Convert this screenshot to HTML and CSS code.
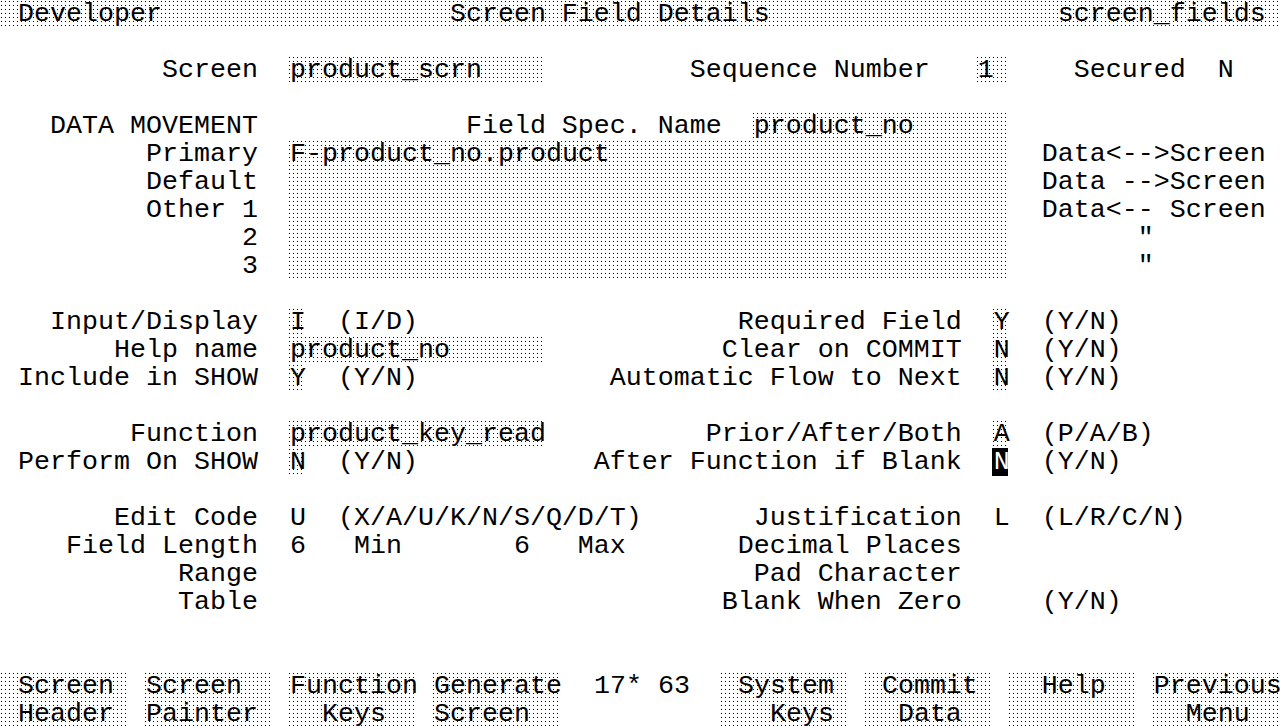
FILE: index.html
```html
<!DOCTYPE html>
<html lang="en">
<head>
<meta charset="utf-8">
<title>Screen Field Details</title>
<link rel="stylesheet" href="styles.css">
</head>
<body>
<main class="term">
<div class="row"><span class="f w80"> Developer                  Screen Field Details                  screen_fields </span></div>
<div class="row"> </div>
<div class="row">          Screen  <span class="f">product_scrn    </span>         Sequence Number   <span class="f">1 </span>    Secured  N</div>
<div class="row"> </div>
<div class="row">   DATA MOVEMENT             Field Spec. Name  <span class="f">product_no      </span></div>
<div class="row">         Primary  <span class="f">F-product_no.product                         </span>  Data&lt;--&gt;Screen</div>
<div class="row">         Default  <span class="f">                                             </span>  Data --&gt;Screen</div>
<div class="row">         Other 1  <span class="f">                                             </span>  Data&lt;-- Screen</div>
<div class="row">               2  <span class="f">                                             </span>        "</div>
<div class="row">               3  <span class="f">                                             </span>        "</div>
<div class="row"> </div>
<div class="row">   Input/Display  <span class="f">I</span>  (I/D)                    Required Field  <span class="f">Y</span>  (Y/N)</div>
<div class="row">       Help name  <span class="f">product_no      </span>           Clear on COMMIT  <span class="f">N</span>  (Y/N)</div>
<div class="row"> Include in SHOW  <span class="f">Y</span>  (Y/N)            Automatic Flow to Next  <span class="f">N</span>  (Y/N)</div>
<div class="row"> </div>
<div class="row">        Function  <span class="f">product_key_read</span>          Prior/After/Both  <span class="f">A</span>  (P/A/B)</div>
<div class="row"> Perform On SHOW  <span class="f">N</span>  (Y/N)           After Function if Blank  <span class="cur">N</span>  (Y/N)</div>
<div class="row"> </div>
<div class="row">       Edit Code  U  (X/A/U/K/N/S/Q/D/T)       Justification  L  (L/R/C/N)</div>
<div class="row">    Field Length  6   Min       6   Max       Decimal Places</div>
<div class="row">           Range                               Pad Character</div>
<div class="row">           Table                             Blank When Zero     (Y/N)</div>
<div class="row"> </div>
<div class="row"> </div>
<div class="row keys"><span class="f"> Screen </span> <span class="f">Screen  </span> <span class="f">Function</span> <span class="f">Generate</span>  17* 63  <span class="f"> System </span> <span class="f"> Commit </span> <span class="f">  Help  </span> <span class="f">Previous</span></div>
<div class="row keys"><span class="f"> Header </span> <span class="f">Painter </span> <span class="f">  Keys  </span> <span class="f">Screen  </span>          <span class="f">   Keys </span> <span class="f">  Data  </span> <span class="f">        </span> <span class="f">  Menu  </span></div>
</main>
</body>
</html>
```

FILE: styles.css
```css
html, body {
  margin: 0;
  padding: 0;
  background: #ffffff;
}

.term {
  box-sizing: border-box;
  width: 1280px;
  height: 726px;
  padding-left: 2px;
  overflow: hidden;
  background: #ffffff;
  color: #000000;
  font-family: "Liberation Mono", "DejaVu Sans Mono", monospace;
  font-size: 26.66px;
  line-height: 28px;
  font-kerning: none;
  font-variant-ligatures: none;
}

.row {
  height: 28px;
  white-space: pre;
}

.f,
.cur {
  display: inline-block;
  height: 28px;
  vertical-align: top;
  white-space: pre;
  margin-left: -2px;
  padding-left: 2px;
}

.f {
  position: relative;
  z-index: 0;
}

/* halftone field fill: spans the character cells only (not the 2px glyph offset) */
.f::before {
  content: "";
  position: absolute;
  top: 0;
  bottom: 0;
  left: 0;
  right: 2px;
  z-index: -1;
  background-color: #000000;
  background-image:
    linear-gradient(to right, transparent 1px, #ffffff 1px),
    linear-gradient(to bottom, transparent 1px, #ffffff 1px);
  background-size: 4px 4px;
  background-position: 1px 1px;
}

.w80 {
  box-sizing: border-box;
  width: 1280px;
}

.w80::before {
  right: 0;
}

.cur {
  background: #000000;
  color: #ffffff;
  width: 16px;
  box-sizing: border-box;
  margin-right: 2px;
}
```
